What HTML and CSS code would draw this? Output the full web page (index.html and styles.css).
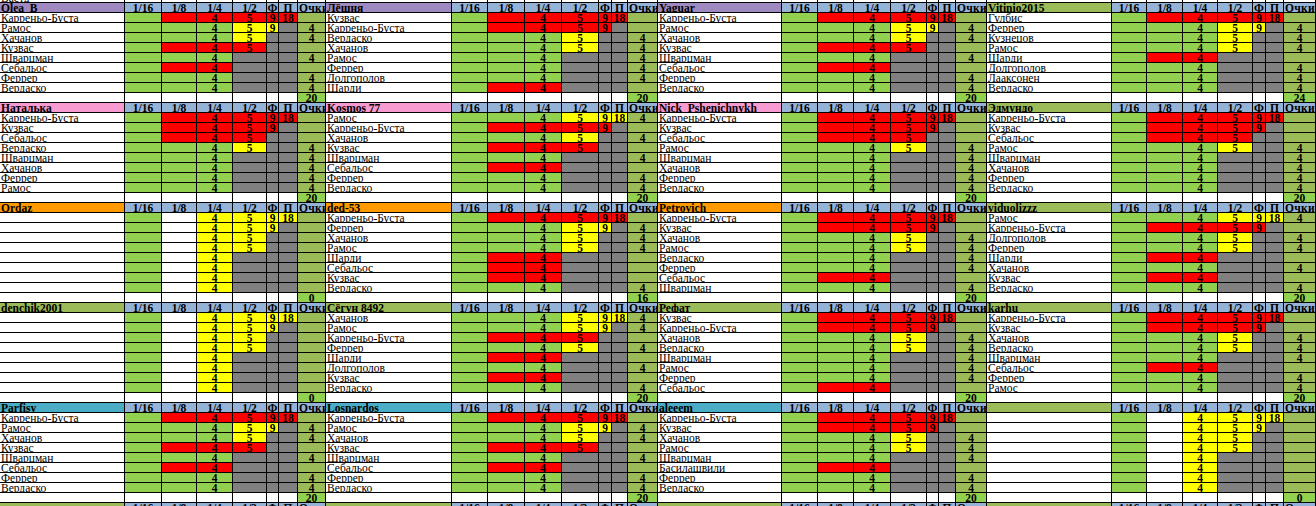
FILE: index.html
```html
<!DOCTYPE html>
<html lang="ru">
<head>
<meta charset="utf-8">
<title>Прогнозы</title>
<link rel="stylesheet" href="styles.css">
</head>
<body>
<main class="sheet" id="sheet"></main>
<script src="script.js"></script>
</body>
</html>
```

FILE: styles.css
```css
html, body {
  margin: 0;
  padding: 0;
  height: 506px;
  overflow: hidden;
  background: #fff;
}

.sheet {
  display: grid;
  grid-template-columns:
    125px 37px 35px 36px 34px 12px 19px 28px
    126px 36px 37px 37px 37px 13px 16px 30px
    124px 36px 36px 37px 36px 12px 17px 31px
    125px 35px 36px 35px 35px 13px 18px 32px;
  grid-auto-rows: 10px;
  width: 1316px;
  margin-top: -7px;
  font-family: "Liberation Serif", "Times New Roman", serif;
  font-size: 11.5px;
  color: #000;
}

.c {
  box-sizing: border-box;
  border-right: 1px solid #000;
  border-bottom: 1px solid #000;
  line-height: 9px;
  height: 10px;
  padding-top: 0.5px;
  overflow: hidden;
  white-space: nowrap;
  text-align: center;
  font-weight: bold;
  background: #fff;
}

.n {
  text-align: left;
  font-weight: normal;
  padding-left: 1px;
}

.h { font-weight: bold; }

.ok {
  text-align: left;
  padding-left: 1px;
  letter-spacing: 0.3px;
}

.g { background: #92d050; }
.r { background: #ff0000; }
.y { background: #ffff00; }
.x { background: #808080; }
.w { background: #ffffff; }
.o { background: #9bbb59; }
.t { background: #92d050; }
.hd { background: #95b3d7; }

.pu { background: #9e8ac0; }
.pk { background: #f79bd0; }
.or { background: #ff9900; }
.ol { background: #9bbb59; }
.te { background: #4bacc6; }
```

FILE: script.js
```js
const A = [['Карреньо-Буста','rrrrr'],['Рамос','ggyyx',4],['Хачанов','ggyxx',4],['Кузвас','rrrxx'],['Шварцман','ggxxx',4],['Себальос','rrxxx'],['Феррер','ggxxx',4],['Вердаско','ggxxx',4]];
const E = [['','wyyyy'],['','wyyyx'],['','wyyxx'],['','wyyxx'],['','wyxxx'],['','wyxxx'],['','wyxxx'],['','wyxxx']];
const B = [['Карреньо-Буста','rrrrr'],['Кузвас','rrrrx'],['Себальос','rrrxx'],['Рамос','ggyxx',4],['Шварцман','ggxxx',4],['Хачанов','ggxxx',4],['Феррер','ggxxx',4],['Вердаско','ggxxx',4]];

const bands = [
  [
    ['Olea_B','pu',A,20],
    ['Лёшня','pu',[['Кузвас','rrrrr'],['Карреньо-Буста','rrrrx'],['Вердаско','ggyxx',4],['Хачанов','ggyxx',4],['Рамос','ggxxx',4],['Феррер','ggxxx',4],['Долгополов','ggxxx',4],['Шарди','rrxxx']],20],
    ['Yaguar','pu',A,20],
    ['Vitinio2015','ol',[['Гулбис','rrrrr'],['Феррер','ggyyx',4],['Кузнецов','ggyxx',4],['Рамос','ggyxx',4],['Шарди','rrxxx'],['Долгополов','ggxxx',4],['Лааксонен','ggxxx',4],['Вердаско','ggxxx',4]],24]
  ],
  [
    ['Наталька','pk',[['Карреньо-Буста','rrrrr'],['Кузвас','rrrrx'],['Себальос','rrrxx'],['Вердаско','ggyxx',4],['Шварцман','ggxxx',4],['Хачанов','ggxxx',4],['Феррер','ggxxx',4],['Рамос','ggxxx',4]],20],
    ['Kosmos 77','pk',[['Рамос','ggyyy',4],['Карреньо-Буста','rrrrx'],['Хачанов','ggyxx',4],['Кузвас','rrrxx'],['Шварцман','ggxxx',4],['Себальос','rrxxx'],['Феррер','ggxxx',4],['Вердаско','ggxxx',4]],20],
    ['Nick_Pshenichnykh','pk',B,20],
    ['Эдмундо','ol',B,20]
  ],
  [
    ['Ordaz','or',E,0],
    ['ded-53','or',[['Карреньо-Буста','rrrrr'],['Феррер','ggyyx',4],['Хачанов','ggyxx',4],['Рамос','ggyxx',4],['Шарди','rrxxx'],['Себальос','rrxxx'],['Кузвас','rrxxx'],['Вердаско','ggxxx',4]],16],
    ['Petrovich','or',[['Карреньо-Буста','rrrrr'],['Кузвас','rrrrx'],['Хачанов','ggyxx',4],['Рамос','ggyxx',4],['Вердаско','ggxxx',4],['Феррер','ggxxx',4],['Себальос','rrxxx'],['Шварцман','ggxxx',4]],20],
    ['viduolizzz','ol',[['Рамос','ggyyy',4],['Карреньо-Буста','rrrrx'],['Долгополов','ggyxx',4],['Феррер','ggyxx',4],['Шарди','rrxxx'],['Хачанов','ggxxx',4],['Кузвас','rrxxx'],['Вердаско','ggxxx',4]],20]
  ],
  [
    ['denchik2001','ol',E,0],
    ['Сёгун 8492','ol',[['Хачанов','ggyyy',4],['Рамос','ggyyx',4],['Карреньо-Буста','rrrxx'],['Феррер','ggyxx',4],['Шарди','rrxxx'],['Долгополов','ggxxx',4],['Кузвас','rrxxx'],['Вердаско','ggxxx',4]],20],
    ['Рефат','ol',[['Кузвас','rrrrr'],['Карреньо-Буста','rrrrx'],['Хачанов','ggyxx',4],['Вердаско','ggyxx',4],['Шварцман','ggxxx',4],['Рамос','ggxxx',4],['Феррер','ggxxx',4],['Себальос','rrxxx']],20],
    ['karhu','ol',[['Карреньо-Буста','rrrrr'],['Кузвас','rrrrx'],['Хачанов','ggyxx',4],['Вердаско','ggyxx',4],['Шварцман','ggxxx',4],['Себальос','rrxxx'],['Феррер','ggxxx',4],['Рамос','ggxxx',4]],20]
  ],
  [
    ['Parfisy','te',A,20],
    ['Losnardos','te',A,20],
    ['aleeem','te',[['Карреньо-Буста','rrrrr'],['Кузвас','rrrrx'],['Хачанов','ggyxx',4],['Рамос','ggyxx',4],['Шварцман','ggxxx',4],['Басилашвили','rrxxx'],['Феррер','ggxxx',4],['Вердаско','ggxxx',4]],20],
    ['','ol',E,0]
  ]
];

const sheet = document.getElementById('sheet');
const HD = ['1/16','1/8','1/4','1/2','Ф','П','Очки'];
const VAL = ['','4','5','9','18'];

function cell(cls, txt) {
  const d = document.createElement('div');
  d.className = 'c ' + cls;
  if (txt !== undefined && txt !== '') d.textContent = txt;
  sheet.appendChild(d);
}

function headerRow(band) {
  band.forEach(bl => {
    cell('n h ' + bl[1], bl[0]);
    HD.forEach((h, i) => cell('hd' + (i === 6 ? ' ok' : ''), h));
  });
}

for (let b = 0; b < 4; b++) {
  cell('n', b === 0 ? 'Вастд' : '');
  for (let i = 0; i < 7; i++) cell('w');
}

bands.forEach(band => {
  headerRow(band);
  for (let r = 0; r < 8; r++) {
    band.forEach(bl => {
      const row = bl[2][r];
      cell('n', row[0]);
      cell('g');
      for (let i = 0; i < 5; i++) {
        const k = row[1][i];
        cell(k, (k === 'x' || k === 'w') ? '' : VAL[i]);
      }
      cell('o', row[2] === undefined ? '' : String(row[2]));
    });
  }
  band.forEach(bl => {
    cell('n', '');
    for (let i = 0; i < 6; i++) cell('w');
    cell('t', String(bl[3]));
  });
});

headerRow([['','ol'],['','ol'],['','ol'],['','ol']]);
```
